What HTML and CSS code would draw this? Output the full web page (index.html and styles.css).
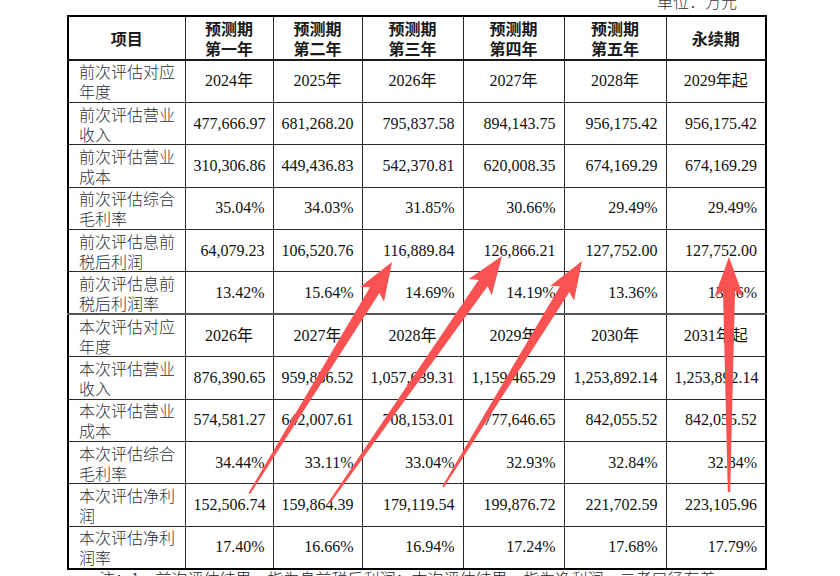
FILE: index.html
```html
<!DOCTYPE html>
<html lang="zh-CN">
<head>
<meta charset="utf-8">
<title>评估对比</title>
<link rel="stylesheet" href="styles.css">
</head>
<body>
<div class="page">
  <div class="unit">单位：万元</div>
  <table class="tbl">
    <colgroup>
      <col class="c0"><col class="c1"><col class="c2"><col class="c3"><col class="c4"><col class="c5"><col class="c6">
    </colgroup>
    <thead>
      <tr class="head">
        <th>项目</th>
        <th>预测期<br>第一年</th>
        <th>预测期<br>第二年</th>
        <th>预测期<br>第三年</th>
        <th>预测期<br>第四年</th>
        <th>预测期<br>第五年</th>
        <th>永续期</th>
      </tr>
    </thead>
    <tbody>
      <tr class="yr"><td>前次评估对应年度</td><td>2024年</td><td>2025年</td><td>2026年</td><td>2027年</td><td>2028年</td><td>2029年起</td></tr>
      <tr><td>前次评估营业收入</td><td>477,666.97</td><td>681,268.20</td><td>795,837.58</td><td>894,143.75</td><td>956,175.42</td><td>956,175.42</td></tr>
      <tr><td>前次评估营业成本</td><td>310,306.86</td><td>449,436.83</td><td>542,370.81</td><td>620,008.35</td><td>674,169.29</td><td>674,169.29</td></tr>
      <tr><td>前次评估综合毛利率</td><td>35.04%</td><td>34.03%</td><td>31.85%</td><td>30.66%</td><td>29.49%</td><td>29.49%</td></tr>
      <tr><td>前次评估息前税后利润</td><td>64,079.23</td><td>106,520.76</td><td>116,889.84</td><td>126,866.21</td><td>127,752.00</td><td>127,752.00</td></tr>
      <tr class="sep"><td>前次评估息前税后利润率</td><td>13.42%</td><td>15.64%</td><td>14.69%</td><td>14.19%</td><td>13.36%</td><td>13.36%</td></tr>
      <tr class="yr"><td>本次评估对应年度</td><td>2026年</td><td>2027年</td><td>2028年</td><td>2029年</td><td>2030年</td><td>2031年起</td></tr>
      <tr><td>本次评估营业收入</td><td>876,390.65</td><td>959,856.52</td><td>1,057,639.31</td><td>1,159,465.29</td><td>1,253,892.14</td><td>1,253,892.14</td></tr>
      <tr><td>本次评估营业成本</td><td>574,581.27</td><td>642,007.61</td><td>708,153.01</td><td>777,646.65</td><td>842,055.52</td><td>842,055.52</td></tr>
      <tr><td>本次评估综合毛利率</td><td>34.44%</td><td>33.11%</td><td>33.04%</td><td>32.93%</td><td>32.84%</td><td>32.84%</td></tr>
      <tr><td>本次评估净利润</td><td>152,506.74</td><td>159,864.39</td><td>179,119.54</td><td>199,876.72</td><td>221,702.59</td><td>223,105.96</td></tr>
      <tr><td>本次评估净利润率</td><td>17.40%</td><td>16.66%</td><td>16.94%</td><td>17.24%</td><td>17.68%</td><td>17.79%</td></tr>
    </tbody>
  </table>
  <p class="note">注：1、前次评估结果，指为息前税后利润；本次评估结果，指为净利润，二者口径有差</p>
  <svg class="arrows" width="840" height="576" viewBox="0 0 840 576" aria-hidden="true">
    <g fill="#fa5252">
      <polygon transform="translate(392,262) rotate(31.65)" points="0,0 14,38 5.5,33 1,272 -1,272 -5.5,33 -14,38"/>
      <polygon transform="translate(502,256) rotate(35)" points="0,0 14,38 5.5,33 1,301 -1,301 -5.5,33 -14,38"/>
      <polygon transform="translate(582,261) rotate(31.6)" points="0,0 14,38 5.5,33 1,265 -1,265 -5.5,33 -14,38"/>
      <polygon transform="translate(729,257) rotate(0)" points="0,0 14.5,40 6,34 1.2,235 -1.2,235 -6,34 -14.5,40"/>
    </g>
  </svg>
</div>
</body>
</html>
```

FILE: styles.css
```css
html, body {
  margin: 0;
  padding: 0;
  background: #ffffff;
}

.page {
  position: relative;
  width: 840px;
  height: 576px;
  overflow: hidden;
  padding: 15px 0 0 67px;
  box-sizing: border-box;
  font-family: "Liberation Serif", "Noto Sans CJK SC", serif;
  color: #111;
}

.unit {
  position: absolute;
  top: -7px;
  left: 657px;
  font-family: "Noto Sans CJK SC", sans-serif;
  font-weight: 300;
  font-size: 16px;
  line-height: 16px;
  color: #333;
}

.tbl {
  border-collapse: collapse;
  table-layout: fixed;
  width: 700px;
  border: 2px solid #000;
  font-size: 16px;
}

.c0 { width: 117px; }
.c1 { width: 88px; }
.c2 { width: 89px; }
.c3 { width: 101px; }
.c4 { width: 101px; }
.c5 { width: 102px; }
.c6 { width: 100px; }

.tbl th,
.tbl td {
  border: 1px solid #2a2a2a;
  padding: 0 8px 0 8px;
  overflow: hidden;
  white-space: nowrap;
}

.head th {
  height: 42px;
  font-family: "Noto Sans CJK SC", sans-serif;
  font-weight: 700;
  font-size: 16px;
  line-height: 20px;
  text-align: center;
  color: #1a1a1a;
  border-bottom: 2px solid #1a1a1a;
}

.tbl tbody tr {
  height: 42.4px;
}

.tbl td {
  text-align: right;
  line-height: 20px;
  color: #111;
}

.tbl td:first-child {
  text-align: left;
  white-space: normal;
  padding: 0 6px 0 10px;
  font-family: "Noto Sans CJK SC", sans-serif;
  font-weight: 300;
  color: #2b2f3a;
  word-break: break-all;
}

.tbl tr.yr td {
  text-align: center;
}

.tbl tr.yr td:first-child {
  text-align: left;
}

.tbl tr.sep td {
  border-bottom: 2px solid #555;
}

.note {
  margin: 0 0 0 32px;
  font-family: "Noto Sans CJK SC", sans-serif;
  font-weight: 300;
  font-size: 16px;
  line-height: 16px;
  color: #222;
  white-space: nowrap;
}

.arrows {
  position: absolute;
  left: 0;
  top: 0;
  pointer-events: none;
}
```
